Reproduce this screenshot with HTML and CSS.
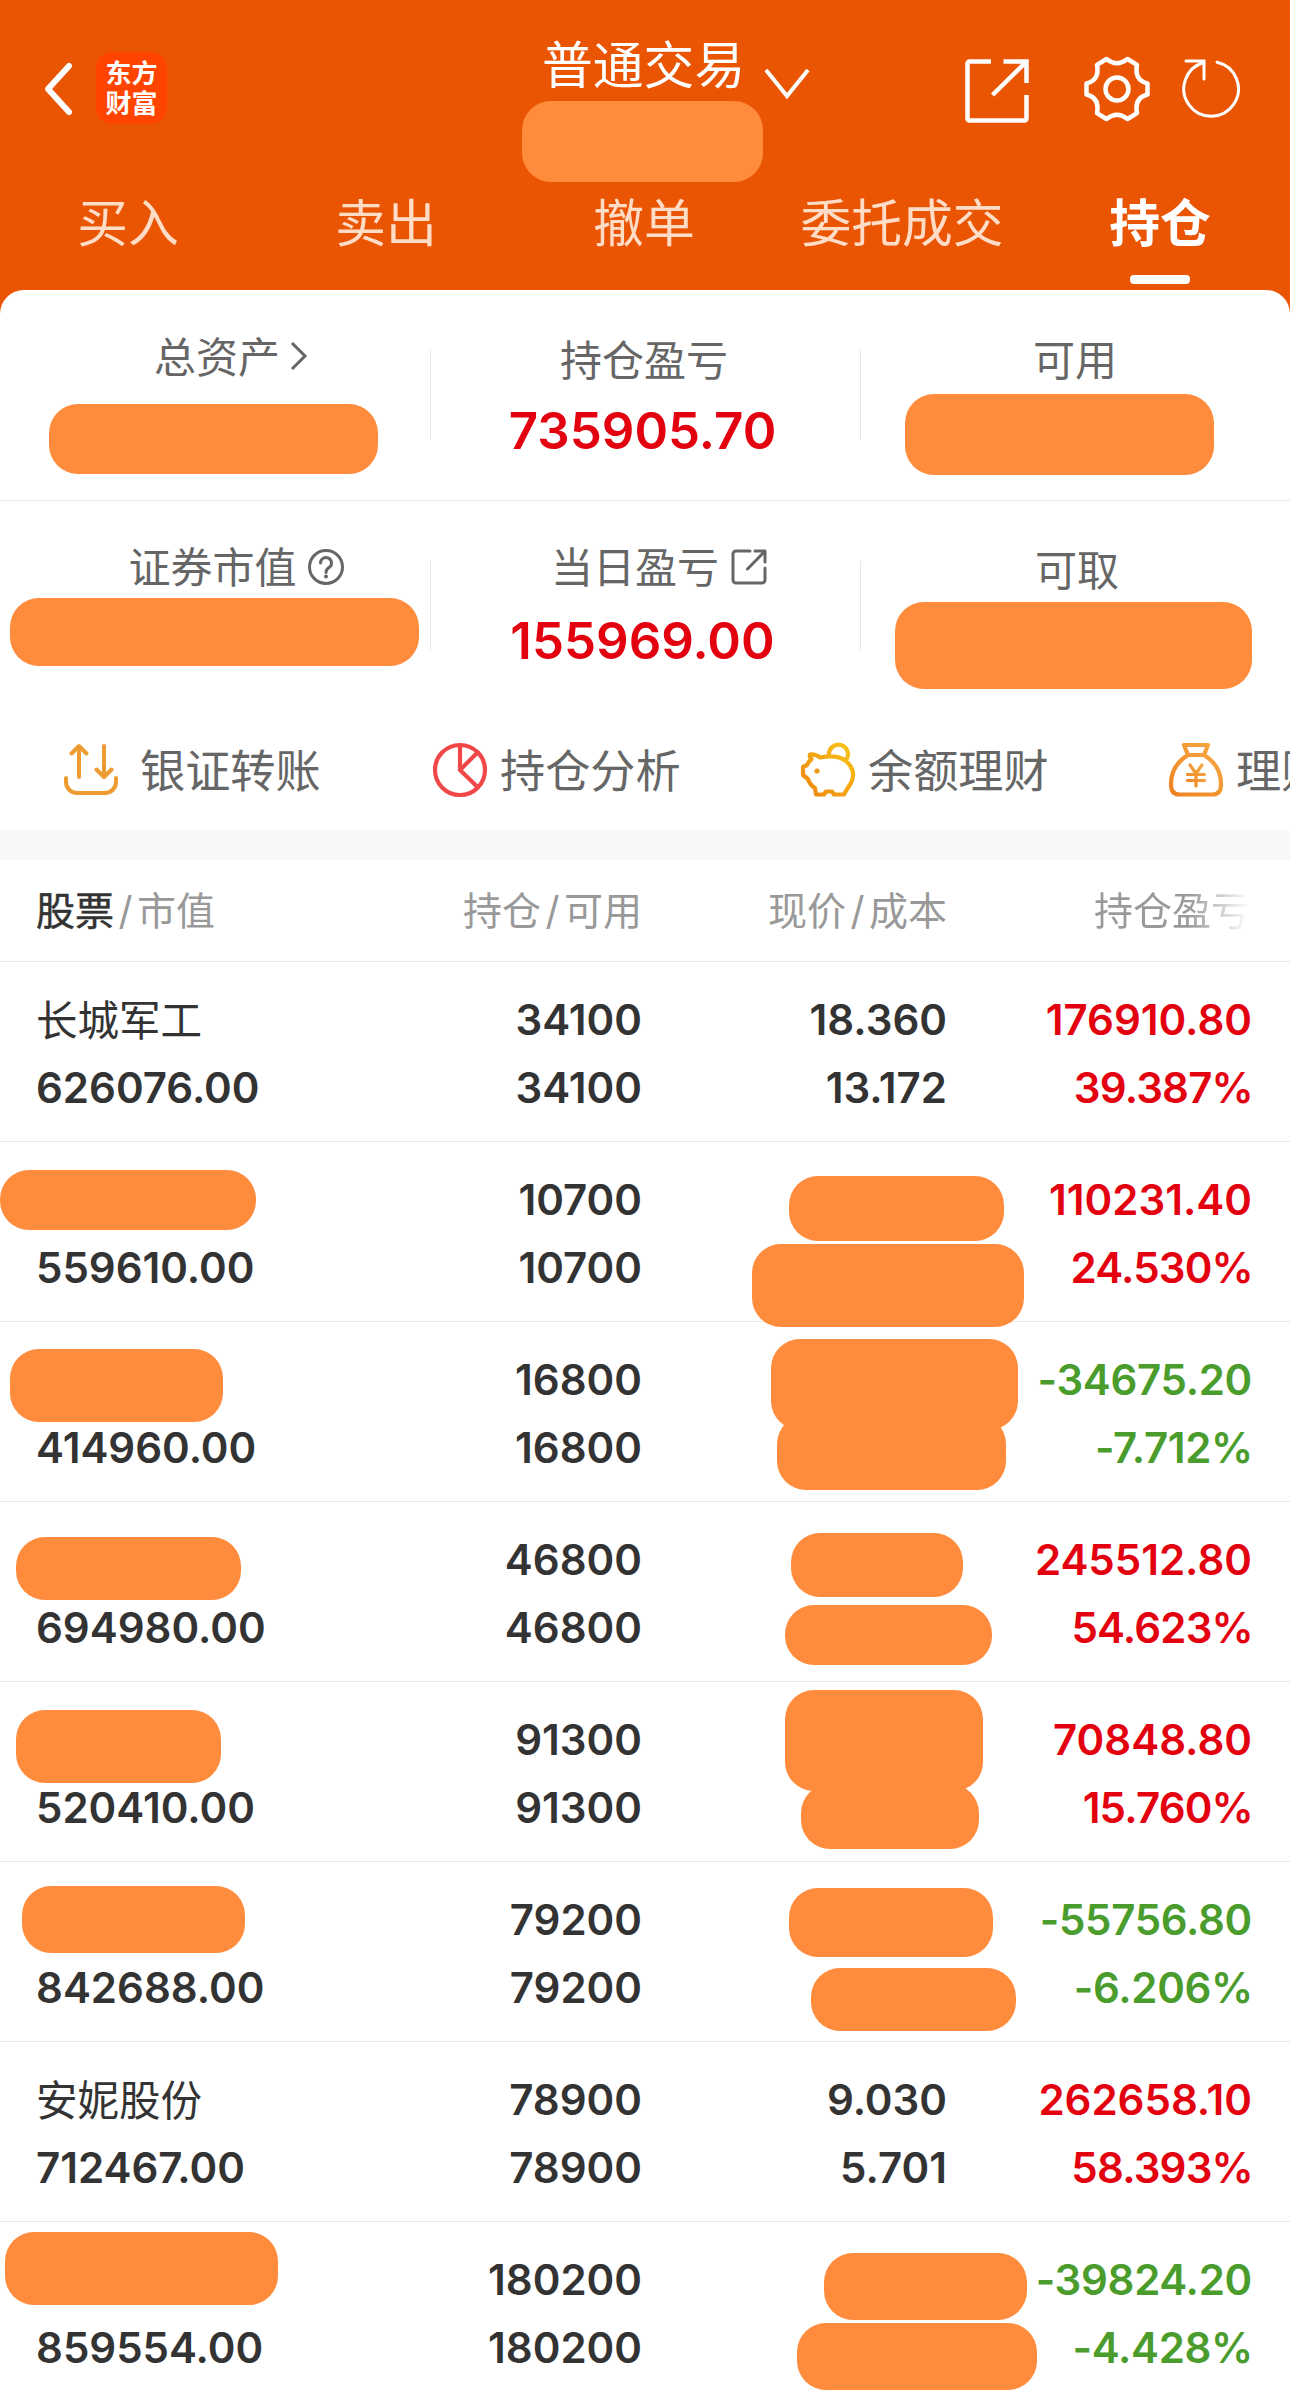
FILE: index.html
```html
<!DOCTYPE html>
<html lang="zh-CN">
<head>
<meta charset="utf-8">
<title>持仓</title>
<link rel="stylesheet" href="styles.css">
</head>
<body>
<div class="screen">
  <header class="header">
    <div class="topbar">
      <svg class="back" viewBox="0 0 34 58"><path d="M29 6 L8 29 L29 52"/></svg>
      <div class="logo"><span>东方</span><span>财富</span></div>
      <div class="title">
        <span class="title-text">普通交易</span>
        <svg class="title-arrow" viewBox="0 0 50 36"><path d="M4 5 L25 31 L46 5"/></svg>
      </div>
      <i class="mask mask-account"></i>
      <div class="actions">
        <svg class="act share" viewBox="0 0 68 68"><path d="M28 4.500H6.500a2 2 0 0 0-2 2V61.500a2 2 0 0 0 2 2H61.500a2 2 0 0 0 2-2V38"/><path d="M40.500 4.500H63.500V26M63 5 L29.500 38"/></svg>
        <svg class="act gear" viewBox="0 0 68 68"><circle cx="34" cy="34" r="11.500"/><path d="M23.500 4 Q34 12.500 44.500 4 L54 9.800 Q51 25 64.500 28.500 V39.500 Q51 43 54 58.200 L44.500 64 Q34 55.500 23.500 64 L14 58.200 Q17 43 3.500 39.500 V28.500 Q17 25 14 9.800 Z"/></svg>
        <svg class="act refresh" viewBox="0 0 64 64"><path d="M37 6.200 A27.300 27.300 0 1 1 24 6.500M6 5H24V23"/></svg>
      </div>
    </div>
    <nav class="tabs">
      <span>买入</span><span>卖出</span><span>撤单</span><span>委托成交</span><span class="active">持仓</span>
    </nav>
  </header>

  <section class="card">
    <div class="metrics">
      <div class="metric m-total"><span class="label">总资产<svg class="chev" viewBox="0 0 20 32"><path d="M3 3 L16 16 L3 29"/></svg></span><i class="mask mask-total"></i></div>
      <div class="metric m-profit"><span class="label">持仓盈亏</span><b class="value">735905.70</b></div>
      <div class="metric"><span class="label">可用</span><i class="mask mask-usable"></i></div>
    </div>
    <div class="metrics">
      <div class="metric m-market"><span class="label">证券市值<svg class="help" viewBox="0 0 38 38"><circle cx="19" cy="19" r="16.500"/><path d="M13.500 15 a5.500 5.500 0 1 1 8.500 4.600 c-2 1.400-3 2.400-3 5"/><circle class="dot" cx="19" cy="28.500" r="2"/></svg></span><i class="mask mask-market"></i></div>
      <div class="metric m-today"><span class="label">当日盈亏<svg class="out" viewBox="0 0 38 38"><path d="M20 3H6a3 3 0 0 0-3 3V32a3 3 0 0 0 3 3H32a3 3 0 0 0 3-3V20"/><path d="M25 3H35V14M34.500 3.500 L17.500 21"/></svg></span><b class="value">155969.00</b></div>
      <div class="metric m-draw"><span class="label">可取</span><i class="mask mask-draw"></i></div>
    </div>
    <div class="shortcuts">
      <div class="shortcut">
        <svg viewBox="0 0 60 60" stroke="#ee9c32"><path d="M5 38V42a11 11 0 0 0 11 11H44a11 11 0 0 0 11-11V38M18 37V7M10.500 13.500L18 6L25.500 13.500M43 6V36M35.500 29.500L43 37L50.500 29.500" stroke-width="4"/></svg>
        <span>银证转账</span>
      </div>
      <div class="shortcut">
        <svg viewBox="0 0 60 60" stroke="#f04848"><circle cx="30" cy="30" r="25"/><path d="M30 5V30L47.500 12.500M30 30L47.500 47"/></svg>
        <span>持仓分析</span>
      </div>
      <div class="shortcut">
        <svg viewBox="0 0 60 60" stroke="url(#gold)"><defs><linearGradient id="gold" x1="1" y1="0" x2="0" y2="1"><stop offset="0" stop-color="#f9c516"/><stop offset="1" stop-color="#ee8611"/></linearGradient></defs><path d="M12 14.500 Q18 14 22 17.500 Q39 14 48 21 Q59 31 53 43 Q49 49 46 54.500H36L34 51.500H28L26 54.500H18L17 48Q12 45 10 39L5 35V27L9 25Q11 21 13.500 19Q11 17 12 14.500Z M31 15.500A9.500 9.500 0 1 1 48 20"/><circle class="eye" cx="19" cy="31" r="2.600"/></svg>
        <span>余额理财</span>
      </div>
      <div class="shortcut">
        <svg viewBox="0 0 60 60"><defs><linearGradient id="amber" x1="1" y1="0" x2="0" y2="1"><stop offset="0" stop-color="#f6ab45"/><stop offset="1" stop-color="#ef8220"/></linearGradient></defs><g stroke="url(#amber)"><path d="M18 5H42L38 15H22ZM22 15C9 23 5 34 5 44Q5 54.500 13 54.500H47Q55 54.500 55 44C55 34 51 23 38 15"/><path d="M24 25L30 33.500L36 25M30 33.500V46M21.500 34.500H38.500M21.500 40.500H38.500" stroke-width="3.200"/></g></svg>
        <span>理财</span>
      </div>
    </div>
  </section>

  <section class="holdings">
    <div class="row head">
      <div class="c1"><span class="strong">股票</span><span class="slash">/</span>市值</div>
      <div>持仓<span class="slash">/</span>可用</div>
      <div>现价<span class="slash">/</span>成本</div>
      <div class="c4"><span class="fade">持仓盈亏</span></div>
    </div>
    <div class="row">
      <div class="c1"><span class="name">长城军工</span><span>626076.00</span></div>
      <div><span>34100</span><span>34100</span></div>
      <div><span>18.360</span><span>13.172</span></div>
      <div class="gain"><span>176910.80</span><span class="pct">39.387%</span></div>
    </div>
    <div class="row r2">
      <div class="c1"><span class="name"></span><span>559610.00</span></div>
      <div><span>10700</span><span>10700</span></div>
      <div></div>
      <div class="gain"><span>110231.40</span><span class="pct">24.530%</span></div>
      <i class="mask m-name"></i><i class="mask m-price"></i><i class="mask m-cost"></i>
    </div>
    <div class="row r3">
      <div class="c1"><span class="name"></span><span>414960.00</span></div>
      <div><span>16800</span><span>16800</span></div>
      <div></div>
      <div class="loss"><span>-34675.20</span><span class="pct">-7.712%</span></div>
      <i class="mask m-name"></i><i class="mask m-price"></i><i class="mask m-cost"></i>
    </div>
    <div class="row r4">
      <div class="c1"><span class="name"></span><span>694980.00</span></div>
      <div><span>46800</span><span>46800</span></div>
      <div></div>
      <div class="gain"><span>245512.80</span><span class="pct">54.623%</span></div>
      <i class="mask m-name"></i><i class="mask m-price"></i><i class="mask m-cost"></i>
    </div>
    <div class="row r5">
      <div class="c1"><span class="name"></span><span>520410.00</span></div>
      <div><span>91300</span><span>91300</span></div>
      <div></div>
      <div class="gain"><span>70848.80</span><span class="pct">15.760%</span></div>
      <i class="mask m-name"></i><i class="mask m-price"></i><i class="mask m-cost"></i>
    </div>
    <div class="row r6">
      <div class="c1"><span class="name"></span><span>842688.00</span></div>
      <div><span>79200</span><span>79200</span></div>
      <div></div>
      <div class="loss"><span>-55756.80</span><span class="pct">-6.206%</span></div>
      <i class="mask m-name"></i><i class="mask m-price"></i><i class="mask m-cost"></i>
    </div>
    <div class="row">
      <div class="c1"><span class="name">安妮股份</span><span>712467.00</span></div>
      <div><span>78900</span><span>78900</span></div>
      <div><span>9.030</span><span>5.701</span></div>
      <div class="gain"><span>262658.10</span><span class="pct">58.393%</span></div>
    </div>
    <div class="row r8">
      <div class="c1"><span class="name"></span><span>859554.00</span></div>
      <div><span>180200</span><span>180200</span></div>
      <div></div>
      <div class="loss"><span>-39824.20</span><span class="pct">-4.428%</span></div>
      <i class="mask m-name"></i><i class="mask m-price"></i><i class="mask m-cost"></i>
    </div>
  </section>
</div>
</body>
</html>
```
FILE: styles.css
```css
* { box-sizing: border-box; }
body {
  margin: 0;
  background: #fff;
  font-family: Inter, "Noto Sans CJK SC", sans-serif;
  color: #333;
}
.screen { width: 1290px; height: 2390px; overflow: hidden; background: #ea5504; }
svg { fill: none; stroke-linecap: round; stroke-linejoin: round; flex: none; display: block; }
.mask { position: absolute; display: block; background: #ff8c3c; border-radius: 29px; }

/* header */
.header { height: 290px; color: #fff; display: flex; flex-direction: column; }
.topbar { position: relative; height: 180px; display: flex; align-items: flex-start; }
.back { width: 34px; height: 58px; margin: 60px 0 0 40px; stroke: #fff; stroke-width: 6; }
.logo {
  width: 71px; height: 72px; margin: 52px 0 0 22px; border-radius: 16px; background: #ff4400;
  display: flex; flex-direction: column; align-items: center; justify-content: center;
  font-size: 26px; line-height: 30px; font-weight: 700; padding-top: 1px;
}
.title { display: flex; width: 270px; margin: 29px 0 0 375px; }
.title-text { width: 202px; font-size: 50.800px; line-height: 74px; white-space: nowrap; }
.title-arrow { width: 50px; height: 36px; margin: 36px 0 0 18px; stroke: #fff; stroke-width: 4; stroke-linecap: butt; stroke-linejoin: miter; }
.mask-account { left: 522px; top: 101px; width: 241px; height: 81px; }
.actions { display: flex; align-items: flex-start; margin: 55px 0 0 151px; }
.act { width: 68px; height: 68px; stroke: #fff; stroke-width: 4.500; }
.share { stroke-linecap: butt; stroke-linejoin: miter; margin-top: 2px; }
.gear { margin-left: 52px; }
.refresh { width: 64px; height: 64px; margin: 1px 0 0 29px; stroke-width: 3; stroke-linejoin: miter; }
.tabs { display: grid; grid-template-columns: repeat(5, 258px); height: 110px; margin-left: -1px; }
.tabs span { display: flex; flex-direction: column; align-items: center; font-size: 50.800px; line-height: 88px; color: #ffdcc6; }
.tabs .active { color: #fff; font-weight: 700; }
.tabs .active::after { content: ""; width: 60px; height: 9px; border-radius: 4px; background: #fff; margin-top: 7px; }

/* summary card */
.card { background: #fff; border-radius: 24px 24px 0 0; height: 540px; overflow: hidden; }
.metrics { height: 210px; display: grid; grid-template-columns: repeat(3, 430px); position: relative; }
.metrics:first-child { border-bottom: 1px solid #e8e8e8; height: 211px; }
.metrics + .metrics { height: 209px; }
.metric { position: relative; display: flex; flex-direction: column; align-items: center; padding-top: 37px; }
.metric + .metric::before { content: ""; position: absolute; left: 0; top: 60px; width: 1px; height: 90px; background: #e8e8e8; }
.label { display: flex; align-items: center; height: 60px; font-size: 42px; color: #666; }
.value { font-size: 51px; line-height: 80px; font-weight: 600; color: #e3000f; margin: 4px 5px 0 0; }
.m-profit .label { margin-right: 2px; }
.m-total { padding-top: 34px; }
.m-total .label { margin-left: 33px; }
.m-market { padding-top: 33px; }
.m-market .label { margin-left: 43px; }
.m-today { padding-top: 33px; }
.m-today .label { margin-left: 29px; }
.m-today .value { margin-top: 7px; }
.m-draw { padding-top: 36px; }
.m-draw .label { margin-left: 4px; }
.chev { width: 20px; height: 32px; margin: 4px 0 0 9px; stroke: #666; stroke-width: 3; stroke-linecap: butt; stroke-linejoin: miter; }
.help, .out { width: 38px; height: 38px; margin: 5px 0 0 10px; stroke: #666; stroke-width: 3; }
.out { margin-left: 11px; }
.dot { fill: #666; stroke: none; }
.eye { fill: #f09a14; stroke: none; }
.mask-total { left: 49px; top: 114px; width: 329px; height: 70px; }
.mask-usable { left: 45px; top: 104px; width: 309px; height: 81px; }
.mask-market { left: 10px; top: 97px; width: 409px; height: 68px; }
.mask-draw { left: 35px; top: 101px; width: 357px; height: 87px; }
.shortcuts { height: 120px; display: flex; white-space: nowrap; }
.shortcut { width: 368px; flex: none; display: flex; align-items: center; font-size: 45.200px; color: #666; gap: 10px; }
.shortcut span { margin-top: -4px; }
.shortcut svg { width: 60px; height: 60px; stroke-width: 4.200; }
.shortcut:first-child { gap: 19px; width: 369px; margin-left: 61px; }

/* holdings table */
.holdings { border-top: 30px solid #f7f8fa; background: #fff; }
.row {
  position: relative; height: 180px; padding: 24px 38px 0 36px; border-bottom: 1px solid #e8e8e8;
  display: grid; grid-template-columns: 300px 306px 305px 305px;
  font-size: 42px; font-weight: 600; line-height: 68px; text-align: right;
}
.row > div { display: flex; flex-direction: column; }
.row > .c1 { text-align: left; }
.row .name { height: 68px; font-size: 41.500px; line-height: 70px; font-weight: 400; }
.row.head { height: 102px; padding-top: 17px; font-size: 39px; font-weight: 400; color: #999; }
.row.head > div { flex-direction: row; justify-content: flex-end; }
.row.head > .c1 { justify-content: flex-start; }
.strong { color: #333; -webkit-text-stroke: 0.500px #333; }
.slash { width: 23px; text-align: center; }
.row.head > .c4 { padding-right: 2px; }
.fade { color: transparent; background: linear-gradient(90deg, #999 60%, #fff 100%); background-clip: text; -webkit-background-clip: text; }
.gain { color: #e3000f; }
.loss { color: #4a9c2d; letter-spacing: -0.300px; }
.pct { letter-spacing: -0.800px; margin-right: -1px; }
.loss .pct { letter-spacing: -0.300px; }

.r2 .m-name { left: 0; top: 28px; width: 256px; height: 60px; }
.r2 .m-price { left: 789px; top: 34px; width: 215px; height: 65px; }
.r2 .m-cost { left: 752px; top: 102px; width: 272px; height: 83px; }
.r3 .m-name { left: 10px; top: 27px; width: 213px; height: 73px; }
.r3 .m-price { left: 771px; top: 17px; width: 247px; height: 91px; }
.r3 .m-cost { left: 777px; top: 93px; width: 229px; height: 75px; }
.r4 .m-name { left: 16px; top: 35px; width: 225px; height: 63px; }
.r4 .m-price { left: 791px; top: 31px; width: 172px; height: 64px; }
.r4 .m-cost { left: 785px; top: 103px; width: 207px; height: 60px; }
.r5 .m-name { left: 16px; top: 28px; width: 205px; height: 73px; }
.r5 .m-price { left: 785px; top: 8px; width: 198px; height: 101px; }
.r5 .m-cost { left: 801px; top: 102px; width: 178px; height: 65px; }
.r6 .m-name { left: 22px; top: 24px; width: 223px; height: 67px; }
.r6 .m-price { left: 789px; top: 26px; width: 204px; height: 69px; }
.r6 .m-cost { left: 811px; top: 106px; width: 205px; height: 63px; }
.r8 .m-name { left: 5px; top: 10px; width: 273px; height: 73px; }
.r8 .m-price { left: 824px; top: 31px; width: 203px; height: 67px; }
.r8 .m-cost { left: 797px; top: 101px; width: 240px; height: 67px; }
```
